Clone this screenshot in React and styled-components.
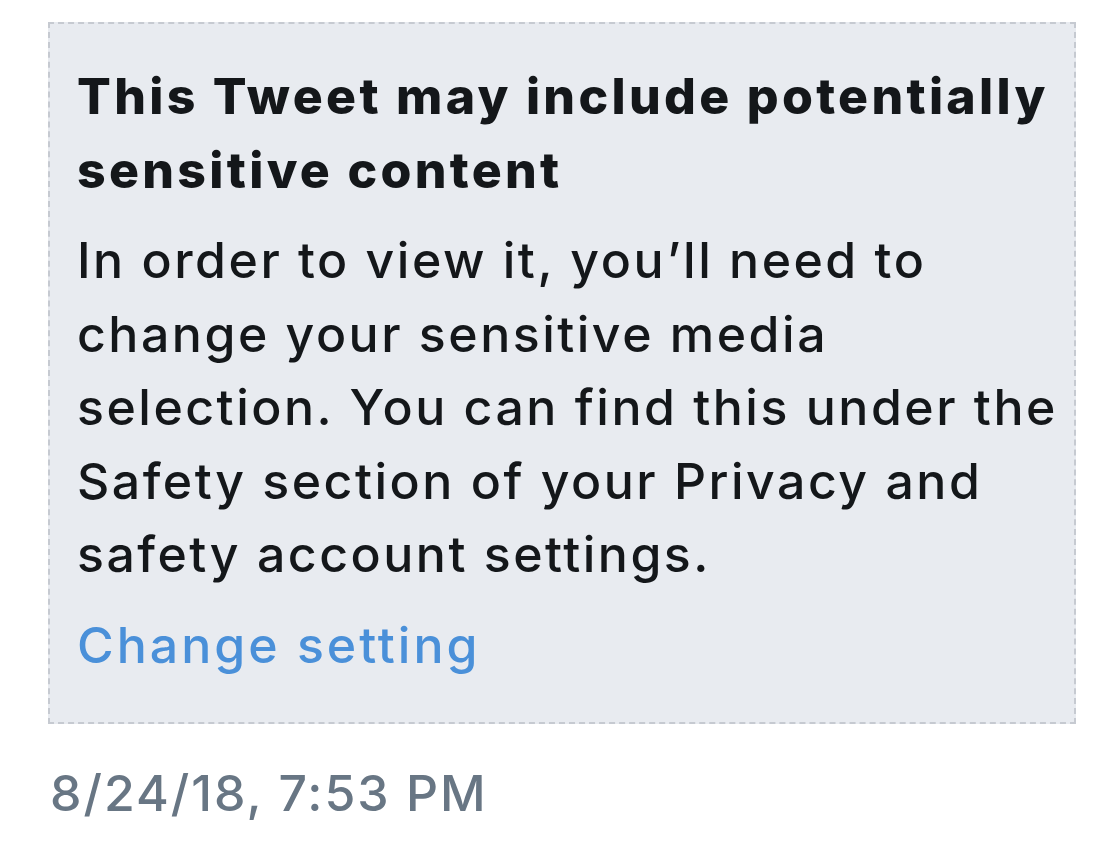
import React from "react";
import styled, { createGlobalStyle } from "styled-components";

const GlobalStyle = createGlobalStyle`
  body {
    margin: 0;
    background: #ffffff;
    font-family: Inter, "Noto Sans", sans-serif;
    -webkit-font-smoothing: antialiased;
  }
`;

const Page = styled.div`
  padding: 22px 23px 0 48px;
`;

const Notice = styled.div`
  background: #e8ebf0;
  border: 2px dashed #c6cad1;
  padding: 35px 8px 40px 27px;
  display: flex;
  flex-direction: column;
  white-space: nowrap;
`;

const Title = styled.h2`
  margin: 0;
  font-size: 50px;
  line-height: 74px;
  font-weight: 800;
  letter-spacing: 3.3px;
  color: #14171a;
`;

const Body = styled.p`
  margin: 17px 0 0;
  font-size: 50px;
  line-height: 73.5px;
  font-weight: 500;
  letter-spacing: 2.5px;
  color: #14171a;
`;

const Link = styled.a`
  margin-top: 16px;
  font-size: 50px;
  line-height: 74px;
  font-weight: 500;
  letter-spacing: 3px;
  color: #4a90d9;
  text-decoration: none;
`;

const Time = styled.div`
  margin-top: 32px;
  padding-left: 2px;
  font-size: 50px;
  line-height: 74px;
  font-weight: 500;
  letter-spacing: 2px;
  color: #687684;
`;

const App = () => {
  return (
    <>
      <GlobalStyle />
      <Page>
        <Notice>
          <Title>
            This Tweet may include potentially
            <br />
            sensitive content
          </Title>
          <Body>
            In order to view it, you’ll need to
            <br />
            change your sensitive media
            <br />
            selection. You can find this under the
            <br />
            Safety section of your Privacy and
            <br />
            safety account settings.
          </Body>
          <Link href="#">Change setting</Link>
        </Notice>
        <Time>8/24/18, 7:53 PM</Time>
      </Page>
    </>
  );
};

export default App;
